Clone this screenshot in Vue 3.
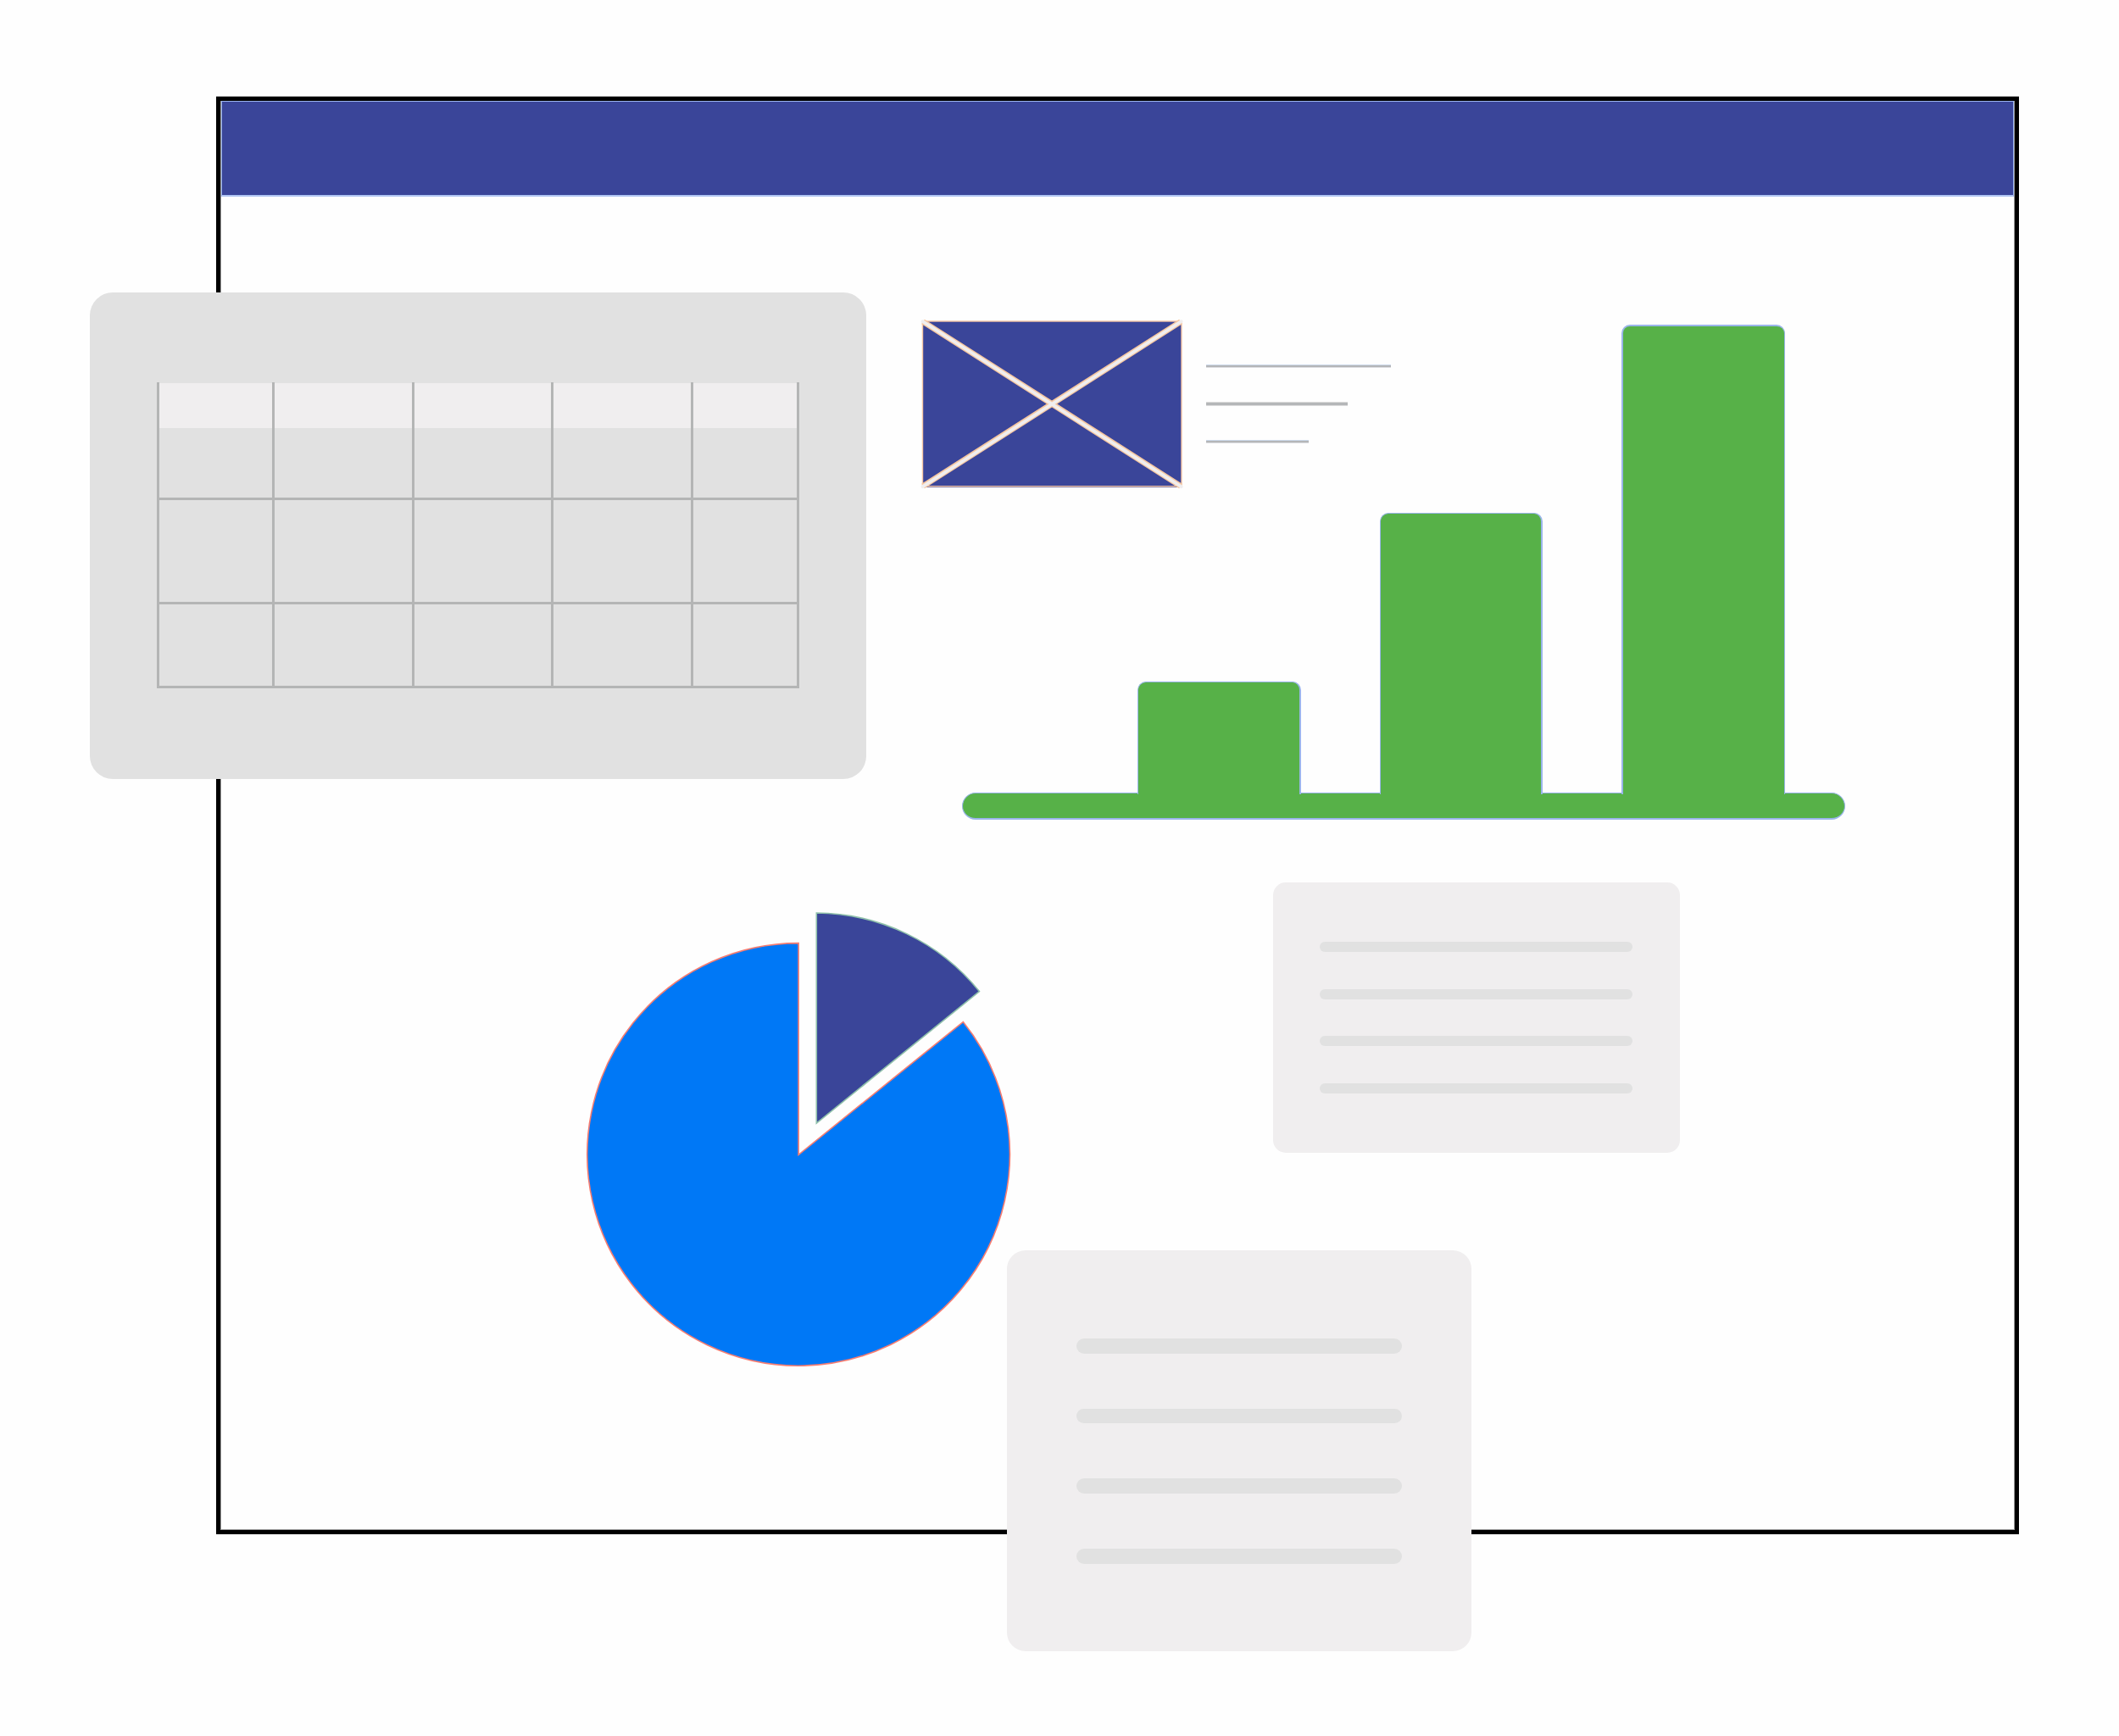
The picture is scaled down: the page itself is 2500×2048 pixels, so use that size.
<template>
  <div class="canvas">
    <div class="window">
      <div class="window-bar"></div>
    </div>

    <div class="piece table-card">
      <div class="table">
        <template v-for="row in 3" :key="row">
          <div v-for="col in 5" :key="col" class="cell" :class="{ head: row === 1 }"></div>
        </template>
      </div>
    </div>

    <div class="piece mail">
      <svg class="envelope" width="312" height="202" viewBox="0 0 312 202">
        <rect x="3" y="3" width="306" height="196" fill="#3a4599" />
        <rect x="3.5" y="3" width="305.5" height="194.7" fill="none" stroke="#f5c6a5" stroke-width="1.4" />
        <g stroke-linecap="round">
          <path d="M4 3.5 308 197.5M308 3.5 4 197.5" stroke="#f6c7a0" stroke-width="6.8" stroke-linecap="butt" />
          <path d="M3.5 3.2 308.7 198.2M308.7 3.2 3.5 198.2" stroke="#f0eeef" stroke-width="3.8" />
        </g>
      </svg>
      <div class="mail-lines">
        <span v-for="w in mailLines" :key="w" class="mail-line" :style="{ width: w + 'px' }"></span>
      </div>
    </div>

    <div class="piece chart">
      <div class="bars">
        <div v-for="h in bars" :key="h" class="bar" :style="{ height: h + 'px' }"></div>
      </div>
      <div class="axis"></div>
    </div>

    <svg class="piece pie" width="510" height="550" viewBox="0 0 510 550">
      <path d="M257.1 297.3V47.6A249.3 249.3 0 1 0 451.3 140.6Z" fill="#0078f6" stroke="#f67d72" stroke-width="1.6" />
      <path d="M278.3 260V12A248.4 248.4 0 0 1 470.4 104.6Z" fill="#3a4599" stroke="#8fc0ab" stroke-width="1.6" />
    </svg>

    <div class="piece note note-small">
      <span v-for="n in 4" :key="n" class="note-line"></span>
    </div>

    <div class="piece note note-large">
      <span v-for="n in 4" :key="n" class="note-line"></span>
    </div>
  </div>
</template>

<script setup>
const mailLines = [218, 167, 121]
const bars = [133, 332, 554]
</script>

<style>
body {
  background: #fefefe;
}
</style>

<style scoped>
.canvas {
  position: relative;
  box-sizing: border-box;
  width: 2500px;
  height: 2048px;
  padding: 114px 118px 238px 255px;
  overflow: hidden;
  background: #fefefe;
}

.piece {
  position: absolute;
}

/* window frame */
.window {
  box-sizing: border-box;
  height: 1696px;
  border: 5px solid #000;
  box-shadow: inset 0 0 0 1px rgba(0, 0, 0, 0.4), 0 -1px 0 #d0d0d0;
}

.window-bar {
  box-sizing: border-box;
  height: 113px;
  margin: 0 1px;
  background: #3a4599;
  border: 1px solid #9ab3ee;
  border-bottom: 2px solid #b0c5f3;
}

/* table */
.table-card {
  left: 106px;
  top: 345px;
  box-sizing: border-box;
  width: 915.5px;
  height: 574px;
  padding: 106px 79px;
  border-radius: 27px;
  background: #e1e1e1;
}

.table {
  display: grid;
  grid-template-columns: 136px 165px 164px 165px 125px;
  grid-template-rows: 139px 123px 99px;
  width: 755px;
  border-right: 3px solid #b4b5b5;
}

.cell {
  border-left: 3px solid #b4b5b5;
  border-bottom: 3px solid #b4b5b5;
}

.cell.head {
  background: linear-gradient(#e1e1e1 1px, #f0eeef 1px 54px, #e1e1e1 54px);
}

/* mail */
.mail {
  left: 1085px;
  top: 376px;
  display: flex;
  gap: 26px;
}

.envelope {
  display: block;
}

.mail-lines {
  display: flex;
  flex-direction: column;
  gap: 40px;
  padding-top: 54px;
}

.mail-line {
  height: 2px;
  background: #b4b6b8;
  border-top: 1px solid #ccd9ea;
  border-bottom: 1px solid #dcdde2;
}

.mail-line:nth-child(2) {
  height: 3px;
  border-color: #dcdcdc;
}

/* bar chart */
.chart {
  left: 1135px;
  top: 383px;
  width: 1042px;
}

.bars {
  position: relative;
  z-index: 1;
  display: flex;
  align-items: flex-end;
  gap: 93px;
  padding-left: 207px;
  margin-bottom: -2px;
}

.bar {
  box-sizing: border-box;
  width: 192.5px;
  background: #57b148;
  border: 1px solid #9ab5ea;
  border-right-width: 2px;
  border-bottom: 0;
  border-radius: 10px 10px 0 0;
}

.bar:last-child {
  border-width: 2px 1px 0 2px;
}

.axis {
  box-sizing: border-box;
  height: 32px;
  background: #57b148;
  border: 1px solid #9ab5ea;
  border-bottom-width: 2px;
  border-radius: 16px;
}

.pie {
  left: 685px;
  top: 1065px;
}

/* notes */
.note {
  box-sizing: border-box;
  display: flex;
  flex-direction: column;
  background: #f0eeef;
}

.note-line {
  flex: none;
  background: #e1e1e1;
}

.note-small {
  left: 1502px;
  top: 1041px;
  width: 480px;
  height: 319px;
  padding: 70px 56px 0 55px;
  gap: 43.7px;
  border-radius: 15px;
}

.note-small .note-line {
  height: 12px;
  border-radius: 6px;
}

.note-large {
  left: 1187.5px;
  top: 1475px;
  width: 548.5px;
  height: 473px;
  padding: 104px 82px 0;
  gap: 65px;
  border-radius: 22px;
}

.note-large .note-line {
  height: 17.7px;
  border-radius: 9px;
}
</style>
